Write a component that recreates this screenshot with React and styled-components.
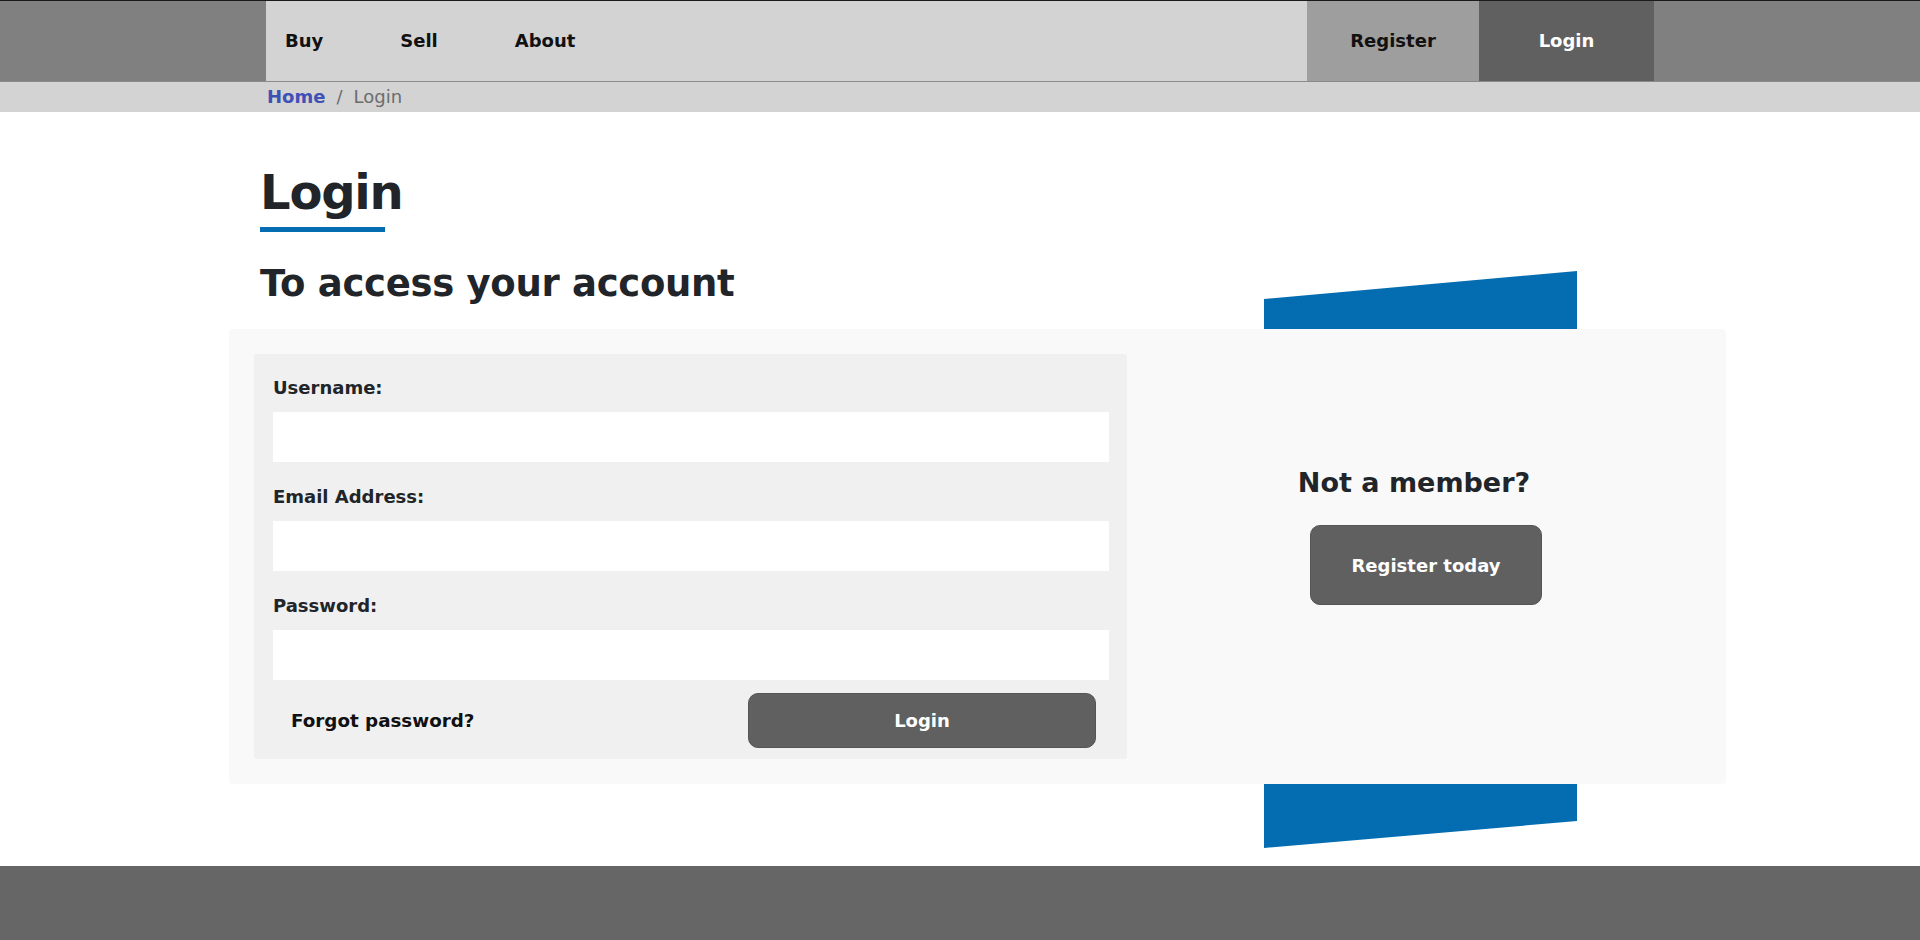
import { createGlobalStyle, styled } from "styled-components";

const GlobalStyle = createGlobalStyle`
  * {
    box-sizing: border-box;
  }

  body {
    margin: 0;
    background: #ffffff;
    font-family: "DejaVu Sans", "Liberation Sans", sans-serif;
    color: #212529;
  }
`;

const Header = styled.header`
  display: flex;
  justify-content: center;
  height: 82px;
  background: #808080;
  border-top: 1px solid #1a1a1a;
  border-bottom: 1px solid #8a8a8a;
`;

const NavBar = styled.nav`
  display: flex;
  width: 1388px;
  background: #d3d3d3;
`;

const NavLinks = styled.div`
  display: flex;
  align-items: center;
  gap: 77px;
  flex: 1;
  padding-left: 19px;
  padding-bottom: 2px;
`;

const NavLink = styled.a`
  font-size: 18px;
  font-weight: bold;
  color: #111111;
  text-decoration: none;
  cursor: pointer;
`;

const AuthLink = styled.a`
  display: flex;
  align-items: center;
  justify-content: center;
  width: ${(p) => p.$width}px;
  padding-bottom: 2px;
  background: ${(p) => (p.$active ? "#606060" : "#9e9e9e")};
  color: ${(p) => (p.$active ? "#ffffff" : "#111111")};
  font-size: 18px;
  font-weight: bold;
  text-decoration: none;
  cursor: pointer;
`;

const Breadcrumb = styled.div`
  height: 30px;
  background: #d3d3d3;
  display: flex;
  justify-content: center;
`;

const CrumbInner = styled.div`
  width: 1388px;
  display: flex;
  align-items: center;
  gap: 11px;
  padding: 0 0 2px 1px;
  font-size: 18px;
  color: #6c6c6c;
`;

const CrumbHome = styled.a`
  color: #3f51b5;
  font-weight: bold;
  text-decoration: none;
`;

const Main = styled.main`
  width: 1497px;
  margin-left: calc(50% - 731px);
  padding-top: 52px;
`;

const TitleBlock = styled.div`
  padding-left: 31px;
`;

const Title = styled.h1`
  margin: 0;
  font-size: 48px;
  line-height: 56px;
  letter-spacing: -1.2px;
  font-weight: bold;
  color: #212529;
`;

const Underline = styled.div`
  width: 125px;
  height: 5px;
  margin-top: 7px;
  background: #046cb0;
`;

const SubTitle = styled.h2`
  margin: 30px 0 24px;
  font-size: 37px;
  line-height: 43px;
  letter-spacing: -0.3px;
  font-weight: bold;
  color: #212529;
`;

const PanelArea = styled.div`
  position: relative;
`;

const Ribbon = styled.div`
  position: absolute;
  left: 1035px;
  top: -58px;
  width: 313px;
  height: 577px;
  background: #046cb0;
  clip-path: polygon(0 28px, 100% 0, 100% 550px, 0 100%);
`;

const Panel = styled.section`
  position: relative;
  z-index: 1;
  display: flex;
  align-items: flex-start;
  padding: 25px;
  height: 455px;
  background: #f9f9f9;
  border-radius: 4px;
`;

const FormBox = styled.form`
  width: 873px;
  height: 405px;
  padding: 23px 18px 0 19px;
  background: #f0f0f0;
  border-radius: 3px;
`;

const Field = styled.div`
  margin-bottom: 24px;
`;

const Label = styled.label`
  display: block;
  margin-bottom: 14px;
  font-size: 18px;
  line-height: 21px;
  font-weight: bold;
  color: #212529;
`;

const Input = styled.input`
  display: block;
  width: 100%;
  height: 50px;
  border: none;
  background: #ffffff;
  padding: 0 12px;
  font-size: 16px;
  font-family: inherit;
`;

const FormFooter = styled.div`
  display: flex;
  align-items: center;
  justify-content: space-between;
  margin-top: -11px;
  padding: 0 13px 0 18px;
`;

const ForgotLink = styled.a`
  font-size: 18.3px;
  font-weight: bold;
  color: #111111;
  text-decoration: none;
  cursor: pointer;
`;

const Button = styled.button`
  width: ${(p) => p.$width}px;
  height: ${(p) => p.$height}px;
  margin-left: ${(p) => p.$shift || 0}px;
  border: 1px solid #555555;
  border-radius: 10px;
  background: #606060;
  color: #ffffff;
  font-family: inherit;
  font-size: 18px;
  font-weight: bold;
  cursor: pointer;
`;

const Aside = styled.div`
  flex: 1;
  display: flex;
  flex-direction: column;
  align-items: center;
  padding: 113px 0 0 14px;
`;

const AsideTitle = styled.h3`
  margin: 0 14px 26px 0;
  font-size: 27px;
  line-height: 32px;
  font-weight: bold;
  color: #212529;
`;

const Footer = styled.footer`
  height: 76px;
  margin-top: 82px;
  background: #666666;
`;

const fields = [
  { id: "username", label: "Username:", type: "text" },
  { id: "email", label: "Email Address:", type: "email" },
  { id: "password", label: "Password:", type: "password" },
];

const App = () => {
  return (
    <>
      <GlobalStyle />
      <Header>
        <NavBar>
          <NavLinks>
            <NavLink>Buy</NavLink>
            <NavLink>Sell</NavLink>
            <NavLink>About</NavLink>
          </NavLinks>
          <AuthLink $width={172}>Register</AuthLink>
          <AuthLink $width={175} $active>
            Login
          </AuthLink>
        </NavBar>
      </Header>
      <Breadcrumb>
        <CrumbInner>
          <CrumbHome>Home</CrumbHome>
          <span>/</span>
          <span>Login</span>
        </CrumbInner>
      </Breadcrumb>
      <Main>
        <TitleBlock>
          <Title>Login</Title>
          <Underline />
          <SubTitle>To access your account</SubTitle>
        </TitleBlock>
        <PanelArea>
          <Ribbon />
          <Panel>
            <FormBox onSubmit={(e) => e.preventDefault()}>
              {fields.map((f) => (
                <Field key={f.id}>
                  <Label htmlFor={f.id}>{f.label}</Label>
                  <Input id={f.id} type={f.type} />
                </Field>
              ))}
              <FormFooter>
                <ForgotLink>Forgot password?</ForgotLink>
                <Button type="submit" $width={348} $height={55}>
                  Login
                </Button>
              </FormFooter>
            </FormBox>
            <Aside>
              <AsideTitle>Not a member?</AsideTitle>
              <Button type="button" $width={232} $height={80} $shift={10}>
                Register today
              </Button>
            </Aside>
          </Panel>
        </PanelArea>
      </Main>
      <Footer />
    </>
  );
};

export default App;
